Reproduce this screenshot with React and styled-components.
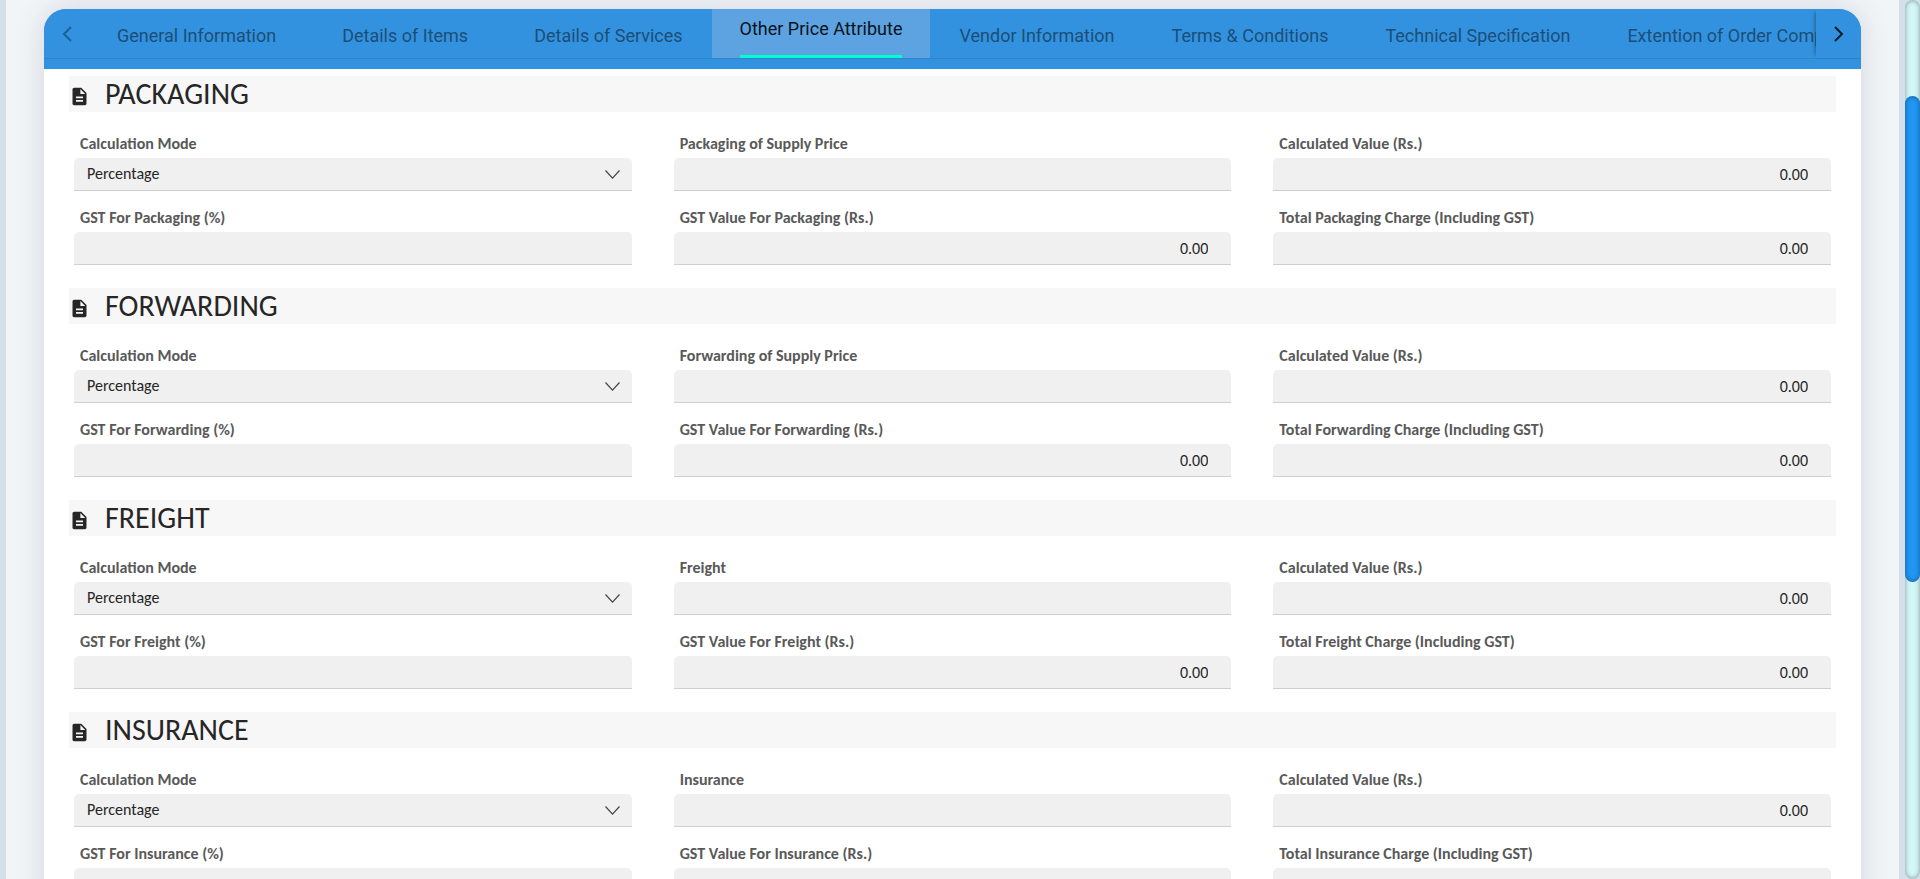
import React, { useId, useState } from 'react';
import styled, { createGlobalStyle } from 'styled-components';
import { MdDescription } from 'react-icons/md';

const GlobalStyle = createGlobalStyle`
  *, *::before, *::after { box-sizing: border-box; }
  body {
    margin: 0;
    font-family: Calibri, Carlito, Lato, sans-serif;
    background: #d3dfe9;
  }
`;

const Shell = styled.div`
  display: flex;
  height: 100vh;
  overflow: hidden;
`;

const Page = styled.main`
  flex: 1;
  min-width: 0;
  margin: 0 6px;
  padding: 9px 38px 0;
  overflow: auto;
  scrollbar-width: none;
  background: #f1f5f8;
`;

const Track = styled.div`
  display: flex;
  flex-direction: column;
  width: 15px;
  border-radius: 8px;
  background: #d3f7f7;
  box-shadow: inset 0 0 5px rgba(0, 0, 0, 0.4);
`;

const TrackSpace = styled.div`
  flex: ${(p) => p.$share} 0 0;
`;

const Thumb = styled.div`
  flex: 486 0 0;
  border-radius: 8px;
  background: #2196f3;
  box-shadow: inset 0 0 5px rgba(0, 0, 0, 0.4);
`;

const Card = styled.section`
  min-height: 100%;
  border-radius: 22px 22px 0 0;
  background: #fff;
  box-shadow: 0 0 30px rgba(60, 60, 80, 0.16);
`;

const TabHeader = styled.header`
  height: 60px;
  border-radius: 22px 22px 0 0;
  background: #3392df;
  overflow: hidden;
`;

const TabBar = styled.div`
  display: flex;
  height: 50px;
  border-bottom: 1px solid #2f83c8;
`;

const PagerButton = styled.button`
  display: flex;
  flex: 0 0 45px;
  align-items: center;
  justify-content: center;
  padding: 0;
  border: 0;
  background: #3392df;
  color: ${(p) => (p.$dim ? '#20608f' : '#0b1c2b')};
  box-shadow: ${(p) => (p.$dim ? 'none' : '-4px 0 4px -3px rgba(0, 0, 0, 0.35)')};
`;

const TabList = styled.div`
  display: flex;
  flex: 1;
  gap: 1px;
  min-width: 0;
  overflow: hidden;
`;

const Tab = styled.button`
  flex: none;
  display: flex;
  justify-content: center;
  min-width: 200px;
  padding: 0 28px;
  border: 0;
  background: ${(p) => (p.$active ? '#5ea3e1' : 'transparent')};
  color: ${(p) => (p.$active ? '#0a131b' : '#1b4e78')};
  font-family: Roboto, sans-serif;
  font-size: 18px;
  line-height: 24px;
  white-space: nowrap;
`;

const TabText = styled.span`
  height: 100%;
  padding-top: ${(p) => (p.$active ? 8 : 15)}px;
  border-bottom: 3px solid ${(p) => (p.$active ? '#00ffd0' : 'transparent')};
`;

const Body = styled.div`
  display: flex;
  flex-direction: column;
  gap: 23px;
  padding: 7px 25px 23px;
`;

const SectionTitle = styled.h2`
  display: flex;
  align-items: center;
  gap: 15px;
  height: 36px;
  margin: 0;
  background: #f7f7f7;
  color: #262626;
  font-size: 30px;
  font-weight: 400;
  line-height: 36px;
`;

const TitleIcon = styled(MdDescription)`
  flex: none;
  width: 21px;
  height: 21px;
  margin-top: 4px;
`;

const FieldGrid = styled.div`
  display: grid;
  grid-template-columns: repeat(3, minmax(0, 1fr));
  column-gap: 42px;
  padding: 5px 5px 0;
`;

const FieldBox = styled.div`
  display: flex;
  flex-direction: column;
`;

const Label = styled.label`
  padding: 17px 6px 4px;
  color: #595959;
  font-size: 16px;
  font-weight: 700;
  line-height: 20px;
`;

const control = `
  width: 100%;
  height: 33px;
  border: 0;
  border-bottom: 1px solid #cfcfcf;
  border-radius: 5px 5px 0 0;
  background: #f0f0f0;
  color: #262626;
  font-family: inherit;
  font-size: 16px;
  line-height: 20px;
  outline: none;
`;

const TextInput = styled.input`
  ${control}
  padding: 0 23px 0 13px;
  text-align: ${(p) => (p.$numeric ? 'right' : 'left')};
`;

const SelectWrap = styled.div`
  display: grid;
  grid-template-columns: 1fr 27px;
  align-items: center;
`;

const Select = styled.select`
  ${control}
  grid-area: 1 / 1 / 2 / 3;
  padding: 0 40px 0 13px;
  appearance: none;
`;

const Caret = styled.svg`
  grid-area: 1 / 2;
  width: 15px;
  height: 9px;
  pointer-events: none;
`;

function Chevron({ d }) {
  return (
    <svg width="10" height="16" viewBox="0 0 10 16" fill="none" stroke="currentColor" strokeWidth="2">
      <path d={d} />
    </svg>
  );
}

function TextField({ label, value }) {
  const id = useId();
  return (
    <FieldBox>
      <Label htmlFor={id}>{label}</Label>
      <TextInput id={id} type="text" defaultValue={value} $numeric={value !== undefined} />
    </FieldBox>
  );
}

function ModeField() {
  const id = useId();
  return (
    <FieldBox>
      <Label htmlFor={id}>Calculation Mode</Label>
      <SelectWrap>
        <Select id={id} defaultValue="Percentage">
          <option>Percentage</option>
        </Select>
        <Caret viewBox="0 0 15 9" fill="none" stroke="#444" strokeWidth="1.2">
          <path d="M.5.5l7 7.6 7-7.6" />
        </Caret>
      </SelectWrap>
    </FieldBox>
  );
}

function ChargeSection({ name, priceLabel }) {
  return (
    <section>
      <SectionTitle>
        <TitleIcon aria-hidden="true" />
        {name.toUpperCase()}
      </SectionTitle>
      <FieldGrid>
        <ModeField />
        <TextField label={priceLabel} />
        <TextField label="Calculated Value (Rs.)" value="0.00" />
        <TextField label={`GST For ${name} (%)`} />
        <TextField label={`GST Value For ${name} (Rs.)`} value="0.00" />
        <TextField label={`Total ${name} Charge (Including GST)`} value="0.00" />
      </FieldGrid>
    </section>
  );
}

const tabs = [
  'General Information',
  'Details of Items',
  'Details of Services',
  'Other Price Attribute',
  'Vendor Information',
  'Terms & Conditions',
  'Technical Specification',
  'Extention of Order Completion',
];

const charges = [
  { name: 'Packaging', priceLabel: 'Packaging of Supply Price' },
  { name: 'Forwarding', priceLabel: 'Forwarding of Supply Price' },
  { name: 'Freight', priceLabel: 'Freight' },
  { name: 'Insurance', priceLabel: 'Insurance' },
];

export default function App() {
  const [active, setActive] = useState('Other Price Attribute');
  return (
    <Shell>
      <GlobalStyle />
      <Page>
        <Card>
          <TabHeader>
            <TabBar>
              <PagerButton type="button" aria-label="Previous tabs" $dim>
                <Chevron d="M9 1L2 8l7 7" />
              </PagerButton>
              <TabList role="tablist">
                {tabs.map((tab) => (
                  <Tab
                    key={tab}
                    type="button"
                    role="tab"
                    aria-selected={tab === active}
                    $active={tab === active}
                    onClick={() => setActive(tab)}
                  >
                    <TabText $active={tab === active}>{tab}</TabText>
                  </Tab>
                ))}
              </TabList>
              <PagerButton type="button" aria-label="Next tabs">
                <Chevron d="M1 1l7 7-7 7" />
              </PagerButton>
            </TabBar>
          </TabHeader>
          <Body>
            {charges.map((charge) => (
              <ChargeSection key={charge.name} {...charge} />
            ))}
          </Body>
        </Card>
      </Page>
      <Track>
        <TrackSpace $share={96} />
        <Thumb />
        <TrackSpace $share={297} />
      </Track>
    </Shell>
  );
}
